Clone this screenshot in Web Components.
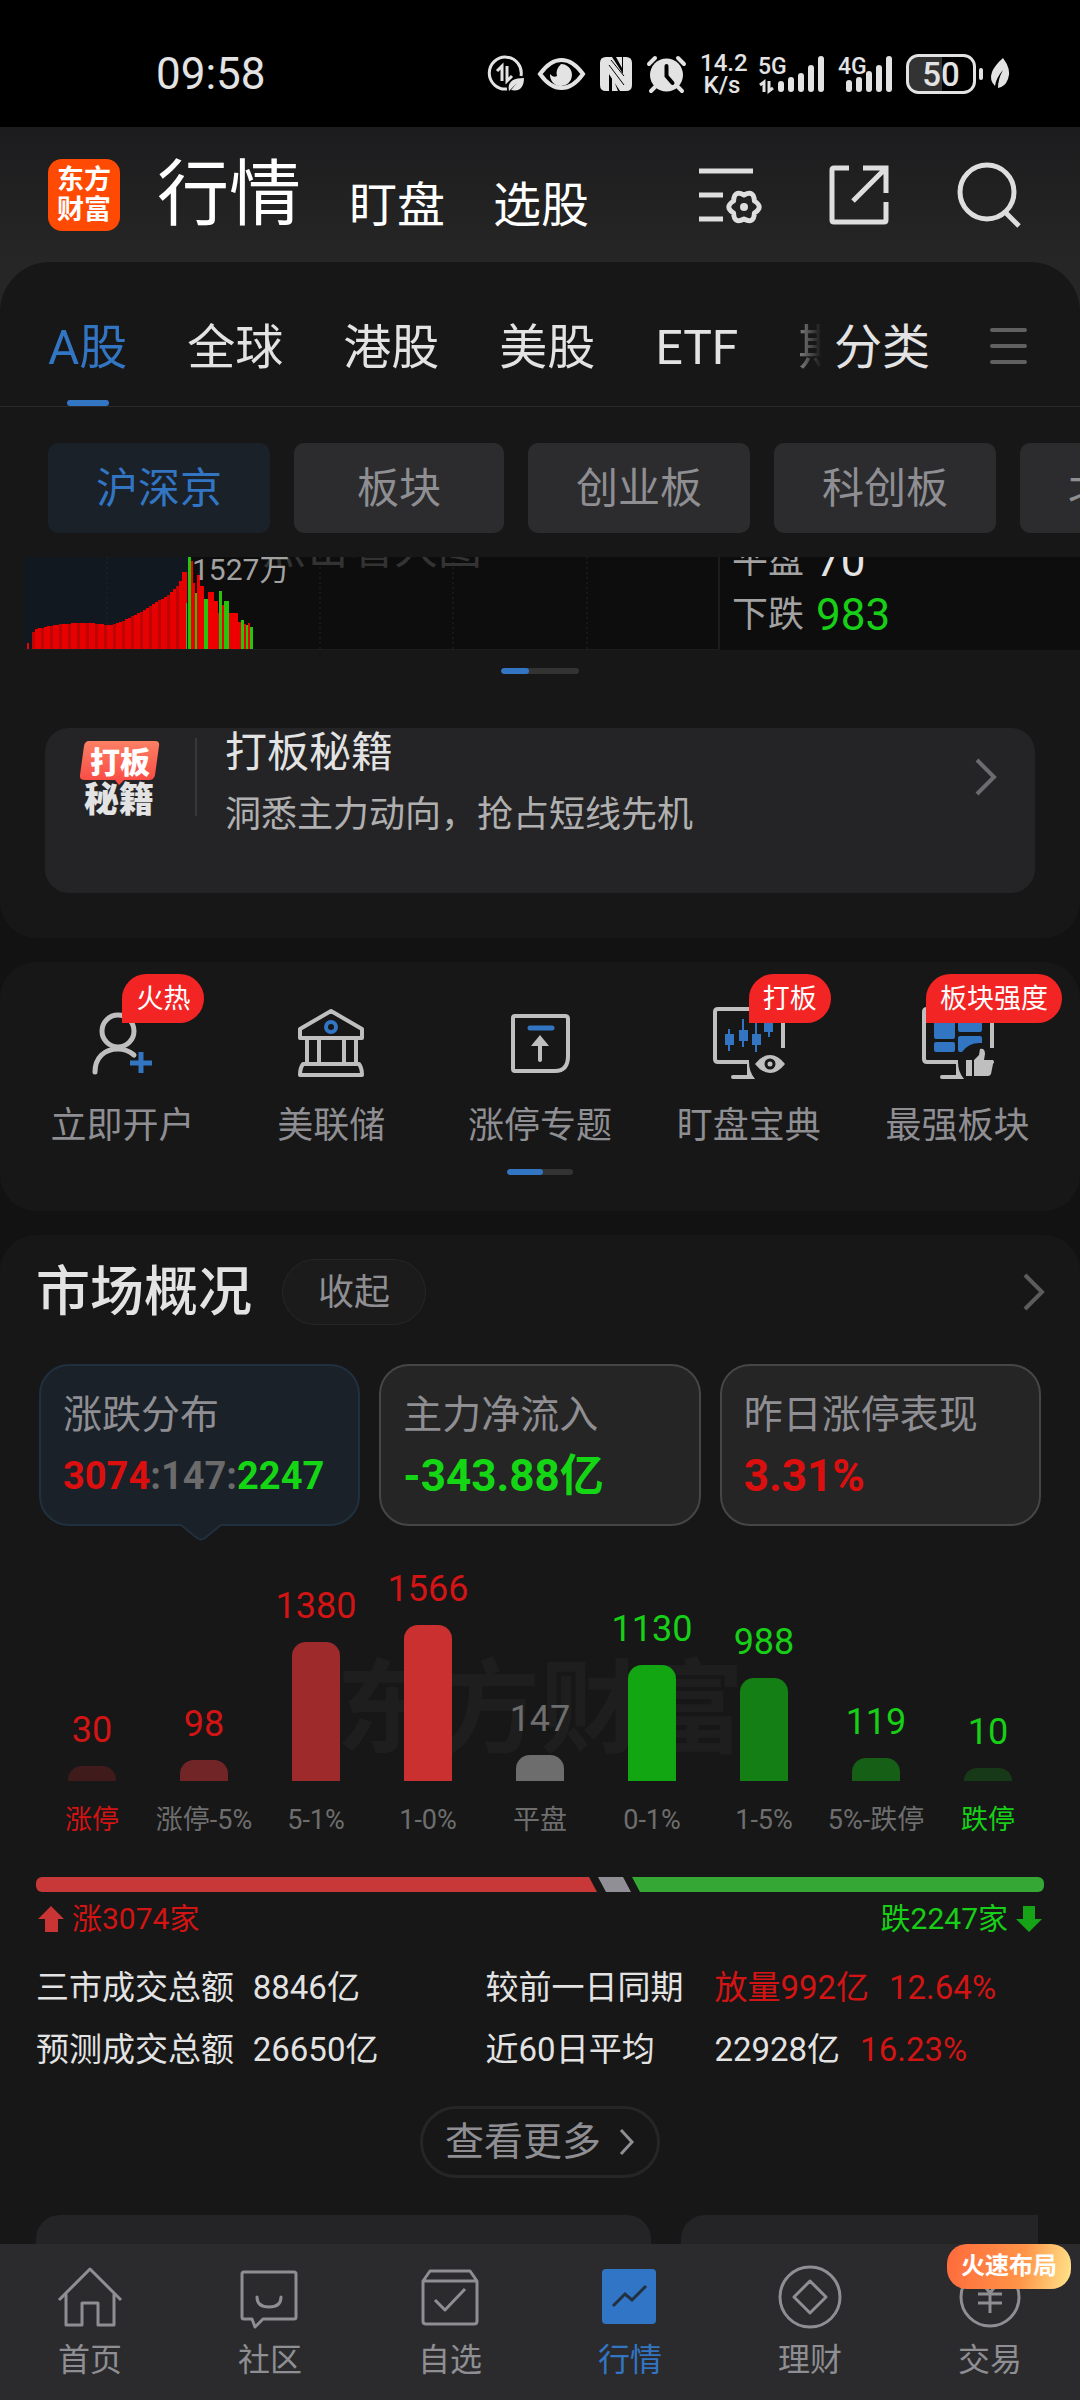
<!DOCTYPE html>
<html lang="zh-CN">
<head>
<meta charset="utf-8">
<meta name="viewport" content="width=device-width, initial-scale=1">
<title>行情</title>
<style>
  body {
    margin: 0;
    background: #121212;
    color: #e3e3e3;
    font-family: Roboto, "Noto Sans CJK SC", sans-serif;
    --blue: #3275c3;
    --red: #d31414;
    --green: #17cf17;
    --muted: #8e8e93;
    --panel: #171717;
  }
</style>
</head>
<body>
<market-app></market-app>

<script>
// every icon is [width, height, markup]
const ICONS = {
  data: [37, 37, `<path d="M34 21A16 16 0 1 0 20 34" fill="none" stroke="#e3e3e3" stroke-width="3"/>
    <path d="M10 16l5-5v15M20 11v15l5-5" fill="none" stroke="#e3e3e3" stroke-width="3"/>
    <path d="M22 36c-2-9 4-13 15-13 0 10-5 14-13 12l6-7z" fill="#e3e3e3"/>`],
  eye: [47, 36, `<path d="M2 18Q12 4 23.500 4T45 18Q35 32 23.500 32T2 18z" fill="none" stroke="#e3e3e3" stroke-width="4"/>
    <path d="M23 8a11 11 0 1 1-11 10q3 4 7 2-2-6 4-12z" fill="#e3e3e3"/>`],
  nfc: [34, 36, `<path d="M7 1h3v34H7q-6 0-6-6V7q0-6 6-6zM24 1h3q6 0 6 6v22q0 6-6 6h-3z" fill="#e3e3e3"/>
    <path d="M8 1h5l13 20v14h-5L8 15zM13 20l6 15h-6zM17 1h6v11z" fill="#e3e3e3"/>
    <path d="M10 9l15 20M12 4l13 16" stroke="#000" stroke-width="1"/>`],
  alarm: [39, 38, `<circle cx="19.500" cy="20" r="16.500" fill="#e3e3e3"/>
    <path d="M2 9l6-6M37 9l-6-6M9 31l-5 5M30 31l5 5" stroke="#e3e3e3" stroke-width="4" stroke-linecap="round"/>
    <path d="M19.500 11v10l6 7" fill="none" stroke="#000" stroke-width="4" stroke-linecap="round"/>`],
  signal5: [66, 38, `<text x="0" y="19" font-size="23" font-weight="500" fill="#e3e3e3">5G</text>
    <path d="M2 30l4-3v10M11 26v10l4-3" fill="none" stroke="#e3e3e3" stroke-width="3"/>
    <path d="M23 29v5M33 25v9M43 21v13M53 13v21M63 4v30" stroke="#e3e3e3" stroke-width="6" stroke-linecap="round"/>`],
  signal4: [54, 38, `<text x="0" y="19" font-size="23" font-weight="500" fill="#e3e3e3">4G</text>
    <path d="M11 28v6M21 25v9M31 19v15M41 13v21M51 4v30" stroke="#e3e3e3" stroke-width="6" stroke-linecap="round"/>`],
  battery: [104, 40, `<path d="M36 3H14Q3 3 3 14v12q0 11 11 11h22z" fill="#333"/>
    <rect x="1.500" y="1.500" width="67" height="37" rx="11" fill="none" stroke="#e3e3e3" stroke-width="3"/>
    <path d="M75 16v8" stroke="#e3e3e3" stroke-width="4" stroke-linecap="round"/>
    <text x="35" y="32" font-size="33" font-weight="500" text-anchor="middle" fill="#e3e3e3">50</text>
    <path d="M97 4q9 12 5 21-3 8-10 9 0-9 5-18-7 8-8 16-6-6-3-14 3-7 11-14z" fill="#e3e3e3"/>`],

  settings: [64, 64, `<g fill="none" stroke="#dedede" stroke-width="5"><path d="M0 8h54M0 32h24M0 56h24"/>
    <path d="M55.400 50Q55 61.300 45 56 35 61.300 34.600 50 25 44 34.600 38 35 26.700 45 32 55 26.700 55.400 38 65 44 55.400 50z" stroke-linejoin="round"/></g>
    <circle cx="45" cy="44" r="4" fill="#dedede"/>`],
  share: [64, 64, `<path d="M21 5H6Q4 5 4 7v50q0 2 2 2h50q2 0 2-2V39M35 5h23v25M58 5L25 38" fill="none" stroke="#dedede" stroke-width="5"/>`],
  search: [64, 64, `<g fill="none" stroke="#dedede" stroke-width="5"><circle cx="30" cy="29" r="27"/><path d="M48 49l14 14"/></g>`],
  menu: [37, 36, `<path d="M2 2h33M2 18h33M2 34h33" stroke="#606060" stroke-width="4" stroke-linecap="round"/>`],
  chevron: [22, 38, `<path d="M2 2l17 17L2 36" fill="none" stroke="currentColor" stroke-width="4"/>`],
  small: [16, 26, `<path d="M2 1l11 12L2 25" fill="none" stroke="currentColor" stroke-width="3"/>`],

  tips: [80, 75, `<defs><linearGradient id="g" x2="0" y2="1"><stop stop-color="#fb8064"/><stop offset="1" stop-color="#fa4642"/></linearGradient></defs>
    <path d="M9 0h66q5 0 4 5l-4 29q-1 5-6 5H44l-5 5-4-5H5q-6 0-5-5L4 5q1-5 5-5z" fill="url(#g)"/>
    <g font-weight="900" text-anchor="middle"><text x="40" y="32" font-size="30" fill="#fff">打板</text>
    <text x="39" y="71" font-size="35" fill="#e3e3e3">秘籍</text></g>`],

  account: [72, 74, `<g fill="none" stroke="#bfbfbf" stroke-width="5"><circle cx="32" cy="25" r="16"/>
    <path d="M9 66C9 52 18 43 32 43q9 0 16 6" stroke-linecap="round"/></g>
    <path d="M55 46v21M44 57h22" stroke="#3275c3" stroke-width="5"/>`],
  bank: [72, 74, `<g fill="none" stroke="#bfbfbf" stroke-width="4" stroke-linejoin="round"><path d="M36 5l31 18v9H5v-9z"/>
    <path d="M12 33v25M24 33v25M49 33v25M61 33v25M8 58h56q3 4 3 11H5q0-7 3-11z"/></g>
    <circle cx="36" cy="21" r="5" fill="none" stroke="#3275c3" stroke-width="4"/>`],
  limit: [72, 74, `<path d="M11 10h50q3 0 3 3v37q0 15-13 15H11q-2 0-2-2V12q0-2 2-2z" fill="none" stroke="#bfbfbf" stroke-width="4"/>
    <path d="M26 22h22" stroke="#3275c3" stroke-width="5" stroke-linecap="round"/>
    <path d="M36 54V38" stroke="#bfbfbf" stroke-width="4" stroke-linecap="round"/><path d="M27 40l9-11 9 11z" fill="#bfbfbf"/>`],
  candles: [72, 74, `<path d="M70 42V6q0-3-3-3H5Q2 3 2 6v47q0 3 3 3h31" fill="none" stroke="#bfbfbf" stroke-width="4"/>
    <path d="M34 56h2q0 10 6 17H20q-2 0-2-2t2-2h14z" fill="#bfbfbf"/>
    <path d="M16 23v22M30 13v28M43 10v36M56 6v25" stroke="#3275c3" stroke-width="2"/>
    <path d="M12 28h9v11h-9zM26 24h9v11h-9zM39 28h9v11h-9zM51 8h9v18h-9z" fill="#3275c3"/>
    <path d="M42 58Q49 49 57 49t15 9q-7 9-15 9t-15-9z" fill="#bfbfbf"/>
    <circle cx="57" cy="58" r="4" fill="none" stroke="#171717" stroke-width="3"/>`],
  blocks: [72, 74, `<path d="M70 42V6q0-3-3-3H5Q2 3 2 6v47q0 3 3 3h31" fill="none" stroke="#bfbfbf" stroke-width="4"/>
    <path d="M34 56h2q0 10 6 17H20q-2 0-2-2t2-2h14z" fill="#bfbfbf"/>
    <g fill="#3275c3"><rect x="12" y="10" width="21" height="23" rx="2"/><rect x="36" y="10" width="24" height="16" rx="2"/>
    <rect x="12" y="36" width="21" height="10" rx="2"/><path d="M38 30h20q2 0 2 2v5q-13-1-20 9h-2q-2 0-2-2V32q0-2 2-2z"/></g>
    <path d="M44 54h6v16h-6zM52 54l5-5 1-6q5-1 5 5l-1 6h9q2 2 0 4l-2 10q-1 2-3 2H52z" fill="#bfbfbf"/>`],

  up: [26, 28, `<path d="M13 1l13 13h-6v13H7V14H0z" fill="#c93434"/>`],
  down: [26, 28, `<path d="M13 27L0 14h7V1h12v13h7z" fill="#17a317"/>`],

  home: [64, 64, `<g fill="none" stroke="#8e8e93" stroke-width="3" stroke-linejoin="round"><path d="M1 35L32 4l31 31"/><path d="M8 29v31h16V38h16v22h16V29"/></g>`],
  chat: [64, 64, `<g fill="none" stroke="#8e8e93" stroke-width="3" stroke-linejoin="round"><path d="M6 7h50q2 0 2 2v43q0 2-2 2H25l-8 8-3-8H6q-2 0-2-2V9q0-2 2-2z"/><path d="M19 32q0 10 12 10t12-10" stroke-linecap="round"/></g>`],
  optional: [64, 64, `<path d="M5 16v40q0 3 3 3h48q3 0 3-3V16L52 6H12zM5 16h54M17 35l10 10 20-21" fill="none" stroke="#8e8e93" stroke-width="3" stroke-linejoin="round"/>`],
  quotes: [64, 64, `<rect x="4" y="4" width="54" height="55" rx="4" fill="#3176c6"/><path d="M15 41l12-12 7 6 14-14" fill="none" stroke="#22303f" stroke-width="3"/>`],
  wealth: [64, 64, `<g fill="none" stroke="#8e8e93" stroke-width="3" stroke-linejoin="round"><circle cx="32" cy="32" r="30"/><path d="M32 16l16 16-16 16-16-16z"/></g>`],
  trade: [64, 64, `<g fill="none" stroke="#8e8e93" stroke-width="3"><circle cx="32" cy="32" r="29"/><path d="M21 14l11 14 11-14M32 28v20M20 29h24M20 38h24"/></g>`],
};

class MkIcon extends HTMLElement {
  static get observedAttributes() {
    return ['name'];
  }
  constructor() {
    super();
    this.attachShadow({ mode: 'open' });
  }
  attributeChangedCallback(attrName, oldValue, newValue) {
    const [w, h, body] = ICONS[newValue];
    this.shadowRoot.innerHTML = `
      <style>
        :host { display: block; flex: none; }
        svg { display: block; overflow: visible; font-family: Roboto, "Noto Sans CJK SC", sans-serif; }
      </style>
      <svg width="${w}" height="${h}" viewBox="0 0 ${w} ${h}" aria-hidden="true">${body}</svg>`;
  }
}

// shared reset for the controls inside each shadow root
const RESET = `
  * { box-sizing: border-box; }
  button { background: none; border: 0; padding: 0; margin: 0; font: inherit; color: inherit; white-space: nowrap; cursor: pointer; }
  a { color: inherit; text-decoration: none; white-space: nowrap; }
`;

class Base extends HTMLElement {
  constructor() {
    super();
    this.attachShadow({ mode: 'open' });
    const t = document.createElement('template');
    t.innerHTML = `<style>${RESET}</style>` + this.markup();
    this.shadowRoot.appendChild(t.content.cloneNode(true));
  }
}

class StatusBar extends Base {
  markup() {
    return `
      <style>
        :host { display: flex; align-items: center; height: 127px; padding: 20px 70px 0 156px; background: #000; box-sizing: border-box; }
        time { font-size: 44px; line-height: 52px; margin-right: auto; }
        .icons { display: flex; align-items: center; gap: 14px; }
        .speed { width: 44px; font-size: 24px; line-height: 22px; font-weight: 500; text-align: center; }
      </style>
      <time>09:58</time>
      <div class="icons">
        <mk-icon name="data"></mk-icon>
        <mk-icon name="eye"></mk-icon>
        <mk-icon name="nfc"></mk-icon>
        <mk-icon name="alarm"></mk-icon>
        <div class="speed">14.2<br>K/s</div>
        <mk-icon name="signal5"></mk-icon>
        <mk-icon name="signal4"></mk-icon>
        <mk-icon name="battery"></mk-icon>
      </div>`;
  }
}

class AppHeader extends Base {
  markup() {
    return `
      <style>
        :host { display: flex; align-items: center; height: 135px; padding: 0 59px 0 48px; background: linear-gradient(#1c1c1e, #262626); box-sizing: border-box; }
        .logo { width: 72px; height: 72px; border-radius: 14px; background: #ff4a03; color: #fff; padding: 6px 0; font-size: 27px; line-height: 30px; font-weight: 700; text-align: center; }
        nav { display: flex; align-items: flex-end; gap: 48px; margin: 0 auto 0 37px; font-size: 48px; line-height: 58px; color: #fff; }
        nav .on { font-size: 72px; line-height: 80px; }
        .tools { display: flex; gap: 65px; }
      </style>
      <div class="logo">东方<br>财富</div>
      <nav>
        <a class="on" href="#quotes">行情</a>
        <a href="#watch">盯盘</a>
        <a href="#pick">选股</a>
      </nav>
      <div class="tools">
        <button aria-label="设置"><mk-icon name="settings"></mk-icon></button>
        <button aria-label="分享"><mk-icon name="share"></mk-icon></button>
        <button aria-label="搜索"><mk-icon name="search"></mk-icon></button>
      </div>`;
  }
}

class MarketPanel extends Base {
  markup() {
    return `
      <style>
        :host { display: block; background: var(--panel); border-radius: 36px; overflow: hidden; }
        :host([first]) { border-radius: 50px 50px 36px 36px; }
        :host([last]) { border-radius: 36px 36px 0 0; }
      </style>
      <slot></slot>`;
  }
}

class MarketTabs extends Base {
  markup() {
    return `
      <style>
        :host { display: flex; align-items: flex-start; padding: 56px 53px 0 48px; border-bottom: 1px solid #2a2a2a; font-size: 48px; line-height: 60px; }
        .scroll { flex: 1; min-width: 0; display: flex; gap: 60px; overflow: hidden; margin-right: 12px; -webkit-mask: linear-gradient(to left, transparent, #000 45px); mask: linear-gradient(to left, transparent, #000 45px); }
        .scroll button { flex: none; padding-bottom: 28px; }
        .on { color: var(--blue); display: flex; flex-direction: column; align-items: center; }
        .scroll .on { padding-bottom: 0; }
        .on::after { content: ""; width: 42px; height: 6px; margin-top: 22px; border-radius: 3px; background: var(--blue); }
        .menu { margin: 10px 0 0 60px; }
      </style>
      <div class="scroll">
        <button class="on">A股</button>
        <button>全球</button>
        <button>港股</button>
        <button>美股</button>
        <button>ETF</button>
        <button>期货</button>
      </div>
      <button>分类</button>
      <button class="menu" aria-label="菜单"><mk-icon name="menu"></mk-icon></button>`;
  }
}

class ChipRow extends Base {
  markup() {
    return `
      <style>
        :host { display: flex; gap: 24px; padding: 36px 0 24px 48px; overflow: hidden; }
        button { flex: none; min-width: 210px; padding: 22px 48px 20px; border-radius: 10px; background: #2c2c2e; color: var(--muted); font-size: 42px; line-height: 48px; }
        .on { background: #1a2129; color: var(--blue); }
      </style>
      <button class="on">沪深京</button>
      <button>板块</button>
      <button>创业板</button>
      <button>科创板</button>
      <button>北证50</button>`;
  }
}

// opening bars rise smoothly, the rest are [x, width, height, colour]
const OPENING = [17,20,21,21,22,23,23,24,24,25,25,25,25,26,26,26,26,26,26,26,26,25,25,25,24,24,24,25,26,27,28,30,31,33,34,36,37,39,41,43,45,47,49,50,52,54,57,60,63,68,77];
const LATER = [
  [161,2,77,'r'],[162,1,46,'g'],[164,3,92,'g'],[167,2,88,'r'],[169,2,66,'r'],[171,2,56,'g'],[173,3,74,'r'],[176,4,63,'r'],
  [180,4,50,'g'],[184,6,57,'r'],[190,4,48,'r'],[194,1,36,'r'],[195,3,58,'g'],[198,2,44,'r'],[200,5,48,'g'],[205,9,36,'r'],
  [214,3,27,'r'],[217,3,29,'g'],[220,2,25,'r'],[222,2,24,'g'],[224,2,26,'r'],[226,3,22,'g'],
];

class VolumeStrip extends Base {
  markup() {
    const bar = (x, w, h, c) => `<rect x="${x}" y="${92 - h}" width="${w}" height="${h}" fill="${c}"/>`;
    const bars = bar(3, 2, 6, '#e00')
      + OPENING.map((h, i) => bar(8 + i * 3, 3, h, i % 3 ? '#e60000' : '#bd0505')).join('')
      + LATER.map(([x, w, h, c]) => bar(x, w, h, c === 'r' ? '#ee0000' : '#27c40c')).join('');
    return `
      <style>
        :host { display: flex; height: 93px; margin-left: 24px; background: #0d0d0d; overflow: hidden; }
        .plot { position: relative; flex: 1; border-right: 2px solid #1c1c1c; border-bottom: 1px solid #1c1c1c; overflow: hidden; }
        svg { display: block; }
        .hint { position: absolute; left: 238px; top: -34px; font-size: 44px; line-height: 52px; color: #333; white-space: nowrap; }
        .peak { position: absolute; left: 168px; top: -5px; font-size: 30px; line-height: 36px; color: #a2a2a2; white-space: nowrap; }
        .counts { flex: none; width: 360px; padding: 0 12px 8px; display: flex; flex-direction: column; justify-content: flex-end; font-size: 36px; line-height: 54px; color: #a2a2a2; }
        .counts div { display: flex; align-items: center; gap: 12px; }
        b { font-size: 44px; font-weight: 400; color: #e3e3e3; }
        .down { color: var(--green); }
      </style>
      <div class="plot">
        <svg width="694" height="92" viewBox="0 0 694 92" aria-hidden="true">
          <rect width="166" height="92" fill="#111820"/>
          <path d="M83 0v92M296 0v92M429 0v92M563 0v92" stroke="#242424" stroke-dasharray="2 3"/>
          ${bars}
        </svg>
        <div class="hint">点击看大图</div>
        <div class="peak">1527万</div>
      </div>
      <div class="counts">
        <div>平盘 <b>70</b></div>
        <div>下跌 <b class="down">983</b></div>
      </div>`;
  }
}

class PageDots extends Base {
  markup() {
    return `
      <style>
        :host { display: block; width: 78px; height: 6px; margin: 18px auto 0; border-radius: 3px; background: #333; overflow: hidden; }
        i { display: block; width: 28px; height: 6px; border-radius: 3px; background: var(--blue); }
        :host([half]) { width: 66px; margin-top: 21px; }
        :host([half]) i { width: 36px; }
      </style>
      <i></i>`;
  }
}

class PromoCard extends Base {
  markup() {
    return `
      <style>
        :host { display: block; margin: 54px 45px 45px; }
        a { display: flex; align-items: flex-start; padding: 2px 38px 56px 35px; border-radius: 24px; background: #242426; }
        .mark { margin-top: 11px; }
        .rule { width: 2px; height: 78px; margin: 8px 28px 0 35px; background: #38383a; }
        .text { flex: 1; }
        .title { font-size: 42px; line-height: 46px; }
        .sub { margin-top: 17px; font-size: 36px; line-height: 44px; color: #b0b0b0; }
        .go { margin-top: 28px; color: #6c6c70; }
      </style>
      <a href="#tips">
        <mk-icon class="mark" name="tips"></mk-icon>
        <div class="rule"></div>
        <div class="text">
          <div class="title"><slot name="title"></slot></div>
          <div class="sub"><slot></slot></div>
        </div>
        <mk-icon class="go" name="chevron"></mk-icon>
      </a>`;
  }
}

class ShortCut extends Base {
  static get observedAttributes() {
    return ['icon', 'badge'];
  }
  markup() {
    return `
      <style>
        :host { display: block; flex: 1; min-width: 0; position: relative; }
        a { display: flex; flex-direction: column; align-items: center; gap: 24px; padding-top: 44px; font-size: 36px; line-height: 44px; color: var(--muted); }
        .badge { position: absolute; left: 50%; top: 12px; padding: 1px 14px 0; border-radius: 25px 25px 25px 0; background: #f22424; color: #fff; font-size: 27px; line-height: 48px; white-space: nowrap; }
        .badge:empty { display: none; }
        :host([wide]) .badge { left: auto; right: 0; }
      </style>
      <a href="#open"><mk-icon></mk-icon><span><slot></slot></span></a>
      <div class="badge"></div>`;
  }
  attributeChangedCallback(attrName, oldValue, newValue) {
    if (attrName === 'icon') {
      this.shadowRoot.querySelector('mk-icon').setAttribute('name', newValue);
    } else {
      this.shadowRoot.querySelector('.badge').textContent = newValue;
    }
  }
}

class ShortCuts extends Base {
  markup() {
    return `
      <style>
        :host { display: block; padding: 0 18px 36px; }
        .row { display: flex; }
      </style>
      <div class="row"><slot></slot></div>
      <page-dots half></page-dots>`;
  }
}

class SectionTitle extends Base {
  markup() {
    return `
      <style>
        :host { display: flex; align-items: center; padding: 24px 35px 0 36px; }
        h2 { margin: 0 30px 0 0; padding-top: 2px; font-size: 54px; line-height: 64px; font-weight: 500; }
        .fold { padding: 2px 35px 0; border: 1px solid #262626; border-radius: 33px; background: #1b1b1b; color: var(--muted); font-size: 36px; line-height: 62px; }
        .more { margin-left: auto; color: #5c5c5e; }
      </style>
      <h2><slot></slot></h2>
      <button class="fold">收起</button>
      <button class="more" aria-label="更多"><mk-icon name="chevron"></mk-icon></button>`;
  }
}

class MetricCard extends Base {
  markup() {
    return `
      <style>
        :host { display: block; position: relative; min-width: 0; }
        button { display: block; width: 100%; padding: 25px 22px 20px; border: 2px solid #464646; border-radius: 30px; background: #252525; text-align: left; }
        .label { font-size: 39px; line-height: 48px; color: var(--muted); }
        .value { margin-top: 9px; font-size: 44px; line-height: 56px; font-weight: 700; }
        :host([on]) button { background: #1b2129; border-color: #20303f; }
        :host([on]) .value { font-size: 38px; }
        svg { display: none; }
        :host([on]) svg { display: block; position: absolute; left: 50%; bottom: -15px; margin-left: -19px; }
      </style>
      <button>
        <div class="label"><slot name="label"></slot></div>
        <div class="value"><slot></slot></div>
      </button>
      <svg width="40" height="17" viewBox="0 0 40 17" aria-hidden="true"><path d="M0 0l16 14q4 4 8 0L40 0z" fill="#1b2129"/><path d="M0 1l16 13q4 3 8 0L40 1" fill="none" stroke="#20303f" stroke-width="2"/></svg>`;
  }
}

const SPREAD = [
  ['涨停', 30, 15, '#3f1b1c', 'up all'],
  ['涨停-5%', 98, 21, '#722526', 'up'],
  ['5-1%', 1380, 139, '#9f2a2b', 'up'],
  ['1-0%', 1566, 156, '#ca3030', 'up'],
  ['平盘', 147, 26, '#6d6d6d', 'flat'],
  ['0-1%', 1130, 116, '#13a613', 'down'],
  ['1-5%', 988, 103, '#147f14', 'down'],
  ['5%-跌停', 119, 23, '#165f16', 'down'],
  ['跌停', 10, 13, '#183918', 'down all'],
];

class SpreadChart extends Base {
  markup() {
    const cols = SPREAD.map(([label, n, h, c, cls]) => `
      <div class="col ${cls}">
        <span class="n">${n}</span>
        <i style="height: ${h}px; background: ${c}"></i>
        <span class="label">${label}</span>
      </div>`).join('');
    return `
      <style>
        :host { display: block; position: relative; margin: 42px 36px 0; }
        .mark { position: absolute; left: 0; right: 0; top: 76px; text-align: center; font-size: 102px; line-height: 132px; font-weight: 700; color: #1e1e1e; }
        .cols { position: relative; display: flex; align-items: flex-end; }
        .col { flex: 1; min-width: 0; display: flex; flex-direction: column; align-items: center; white-space: nowrap; }
        .n { font-size: 36px; line-height: 42px; margin-bottom: 15px; }
        i { width: 48px; border-radius: 14px 14px 0 0; }
        .label { margin-top: 22px; font-size: 27px; line-height: 34px; color: #6e6e6e; }
        .up .n, .up.all .label { color: var(--red); }
        .flat .n { color: #6e6e6e; }
        .down .n, .down.all .label { color: var(--green); }
      </style>
      <div class="mark" aria-hidden="true">东方财富</div>
      <div class="cols">${cols}</div>`;
  }
}

class RatioBar extends Base {
  markup() {
    return `
      <style>
        :host { display: block; margin: 40px 36px 0; }
        .bar { display: flex; gap: 1px; height: 15px; border-radius: 6px; overflow: hidden; }
        .rise { flex: 561; background: #c83838; clip-path: polygon(0 0, calc(100% - 8px) 0, 100% 100%, 0 100%); }
        .even { flex: 0 0 33px; background: #908f95; clip-path: polygon(0 0, 25px 0, 33px 100%, 8px 100%); }
        .fall { flex: 412; background: #35a735; clip-path: polygon(0 0, 100% 0, 100% 100%, 8px 100%); }
        .text { display: flex; justify-content: space-between; margin-top: 9px; padding: 0 2px; font-size: 30px; line-height: 36px; }
        .text span { display: flex; align-items: center; gap: 8px; }
        .up { color: var(--red); }
        .down { color: var(--green); }
      </style>
      <div class="bar"><i class="rise"></i><i class="even"></i><i class="fall"></i></div>
      <div class="text">
        <span class="up"><mk-icon name="up"></mk-icon>涨3074家</span>
        <span class="down">跌2247家<mk-icon name="down"></mk-icon></span>
      </div>`;
  }
}

class TurnoverTable extends Base {
  markup() {
    return `
      <style>
        :host { display: block; margin: 20px 36px 0; }
        table { width: 100%; table-layout: fixed; border-collapse: collapse; font-size: 33px; line-height: 42px; white-space: nowrap; }
        th, td { padding: 10px 0; font-weight: 400; text-align: left; }
        .a { width: 21.5%; } .b { width: 23.1%; } .c { width: 22.7%; }
        .up { color: var(--red); }
        .pct { margin-left: 20px; color: var(--red); }
      </style>
      <table>
        <colgroup><col class="a"><col class="b"><col class="c"><col></colgroup>
        <tr><th>三市成交总额</th><td>8846亿</td><th>较前一日同期</th><td><span class="up">放量992亿</span><span class="pct">12.64%</span></td></tr>
        <tr><th>预测成交总额</th><td>26650亿</td><th>近60日平均</th><td>22928亿<span class="pct">16.23%</span></td></tr>
      </table>`;
  }
}

class MoreButton extends Base {
  markup() {
    return `
      <style>
        :host { display: flex; justify-content: center; margin-top: 25px; }
        button { display: flex; align-items: center; gap: 18px; padding: 0 22px; border: 3px solid #262626; border-radius: 36px; color: var(--muted); font-size: 39px; line-height: 66px; }
      </style>
      <button><slot></slot><mk-icon name="small"></mk-icon></button>`;
  }
}

class NextCards extends Base {
  markup() {
    return `
      <style>
        :host { display: flex; gap: 30px; margin: 37px 42px 0 36px; }
        div { flex: 615; height: 180px; border-radius: 24px; background: #242426; }
        div + div { flex: 357; border-radius: 24px 0 0 24px; }
      </style>
      <div></div><div></div>`;
  }
}

class NavItem extends Base {
  static get observedAttributes() {
    return ['icon', 'badge'];
  }
  markup() {
    return `
      <style>
        :host { display: block; flex: 1; min-width: 0; position: relative; color: var(--muted); }
        :host([on]) { color: var(--blue); }
        a { display: flex; flex-direction: column; align-items: center; gap: 11px; padding: 21px 0 20px; font-size: 32px; line-height: 40px; }
        .badge { position: absolute; right: 9px; top: 0; padding: 0 14px; border-radius: 20px; background: linear-gradient(100deg, #ff6a3c, #ff9447 60%, #ffe58c); color: #fff; font-size: 24px; line-height: 45px; font-weight: 700; white-space: nowrap; }
        .badge:empty { display: none; }
      </style>
      <a href="#nav"><mk-icon></mk-icon><span><slot></slot></span></a>
      <div class="badge"></div>`;
  }
  attributeChangedCallback(attrName, oldValue, newValue) {
    if (attrName === 'icon') {
      this.shadowRoot.querySelector('mk-icon').setAttribute('name', newValue);
    } else {
      this.shadowRoot.querySelector('.badge').textContent = newValue;
    }
  }
}

class BottomNav extends Base {
  markup() {
    return `
      <style>
        :host { display: block; background: #2b2b2d; }
        nav { display: flex; }
      </style>
      <nav><slot></slot></nav>`;
  }
}

class MarketApp extends Base {
  markup() {
    return `
      <style>
        :host { display: flex; flex-direction: column; height: 100vh; }
        main { flex: 1; min-height: 0; overflow: hidden; display: flex; flex-direction: column; gap: 24px; background: linear-gradient(#262626 60px, #121212 60px); }
        main > * { flex: none; }
        .metrics { display: grid; grid-template-columns: repeat(3, 1fr); gap: 19px; margin: 39px 39px 0; }
        .up { color: #dc0f0f; }
        .flat { color: #6b6b6b; }
        .down { color: #14d614; }
      </style>
      <status-bar></status-bar>
      <app-header></app-header>
      <main>
        <market-panel first>
          <market-tabs></market-tabs>
          <chip-row></chip-row>
          <volume-strip></volume-strip>
          <page-dots></page-dots>
          <promo-card><span slot="title">打板秘籍</span>洞悉主力动向，抢占短线先机</promo-card>
        </market-panel>
        <market-panel>
          <short-cuts>
            <short-cut icon="account" badge="火热">立即开户</short-cut>
            <short-cut icon="bank">美联储</short-cut>
            <short-cut icon="limit">涨停专题</short-cut>
            <short-cut icon="candles" badge="打板">盯盘宝典</short-cut>
            <short-cut icon="blocks" badge="板块强度" wide>最强板块</short-cut>
          </short-cuts>
        </market-panel>
        <market-panel last>
          <section-title>市场概况</section-title>
          <div class="metrics">
            <metric-card on><span slot="label">涨跌分布</span><span class="up">3074</span><span class="flat">:147:</span><span class="down">2247</span></metric-card>
            <metric-card><span slot="label">主力净流入</span><span class="down">-343.88亿</span></metric-card>
            <metric-card><span slot="label">昨日涨停表现</span><span class="up">3.31%</span></metric-card>
          </div>
          <spread-chart></spread-chart>
          <ratio-bar></ratio-bar>
          <turnover-table></turnover-table>
          <more-button>查看更多</more-button>
          <next-cards></next-cards>
        </market-panel>
      </main>
      <bottom-nav>
        <nav-item icon="home">首页</nav-item>
        <nav-item icon="chat">社区</nav-item>
        <nav-item icon="optional">自选</nav-item>
        <nav-item icon="quotes" on>行情</nav-item>
        <nav-item icon="wealth">理财</nav-item>
        <nav-item icon="trade" badge="火速布局">交易</nav-item>
      </bottom-nav>`;
  }
}

customElements.define('mk-icon', MkIcon);
customElements.define('status-bar', StatusBar);
customElements.define('app-header', AppHeader);
customElements.define('market-panel', MarketPanel);
customElements.define('market-tabs', MarketTabs);
customElements.define('chip-row', ChipRow);
customElements.define('volume-strip', VolumeStrip);
customElements.define('page-dots', PageDots);
customElements.define('promo-card', PromoCard);
customElements.define('short-cut', ShortCut);
customElements.define('short-cuts', ShortCuts);
customElements.define('section-title', SectionTitle);
customElements.define('metric-card', MetricCard);
customElements.define('spread-chart', SpreadChart);
customElements.define('ratio-bar', RatioBar);
customElements.define('turnover-table', TurnoverTable);
customElements.define('more-button', MoreButton);
customElements.define('next-cards', NextCards);
customElements.define('nav-item', NavItem);
customElements.define('bottom-nav', BottomNav);
customElements.define('market-app', MarketApp);
</script>
</body>
</html>
